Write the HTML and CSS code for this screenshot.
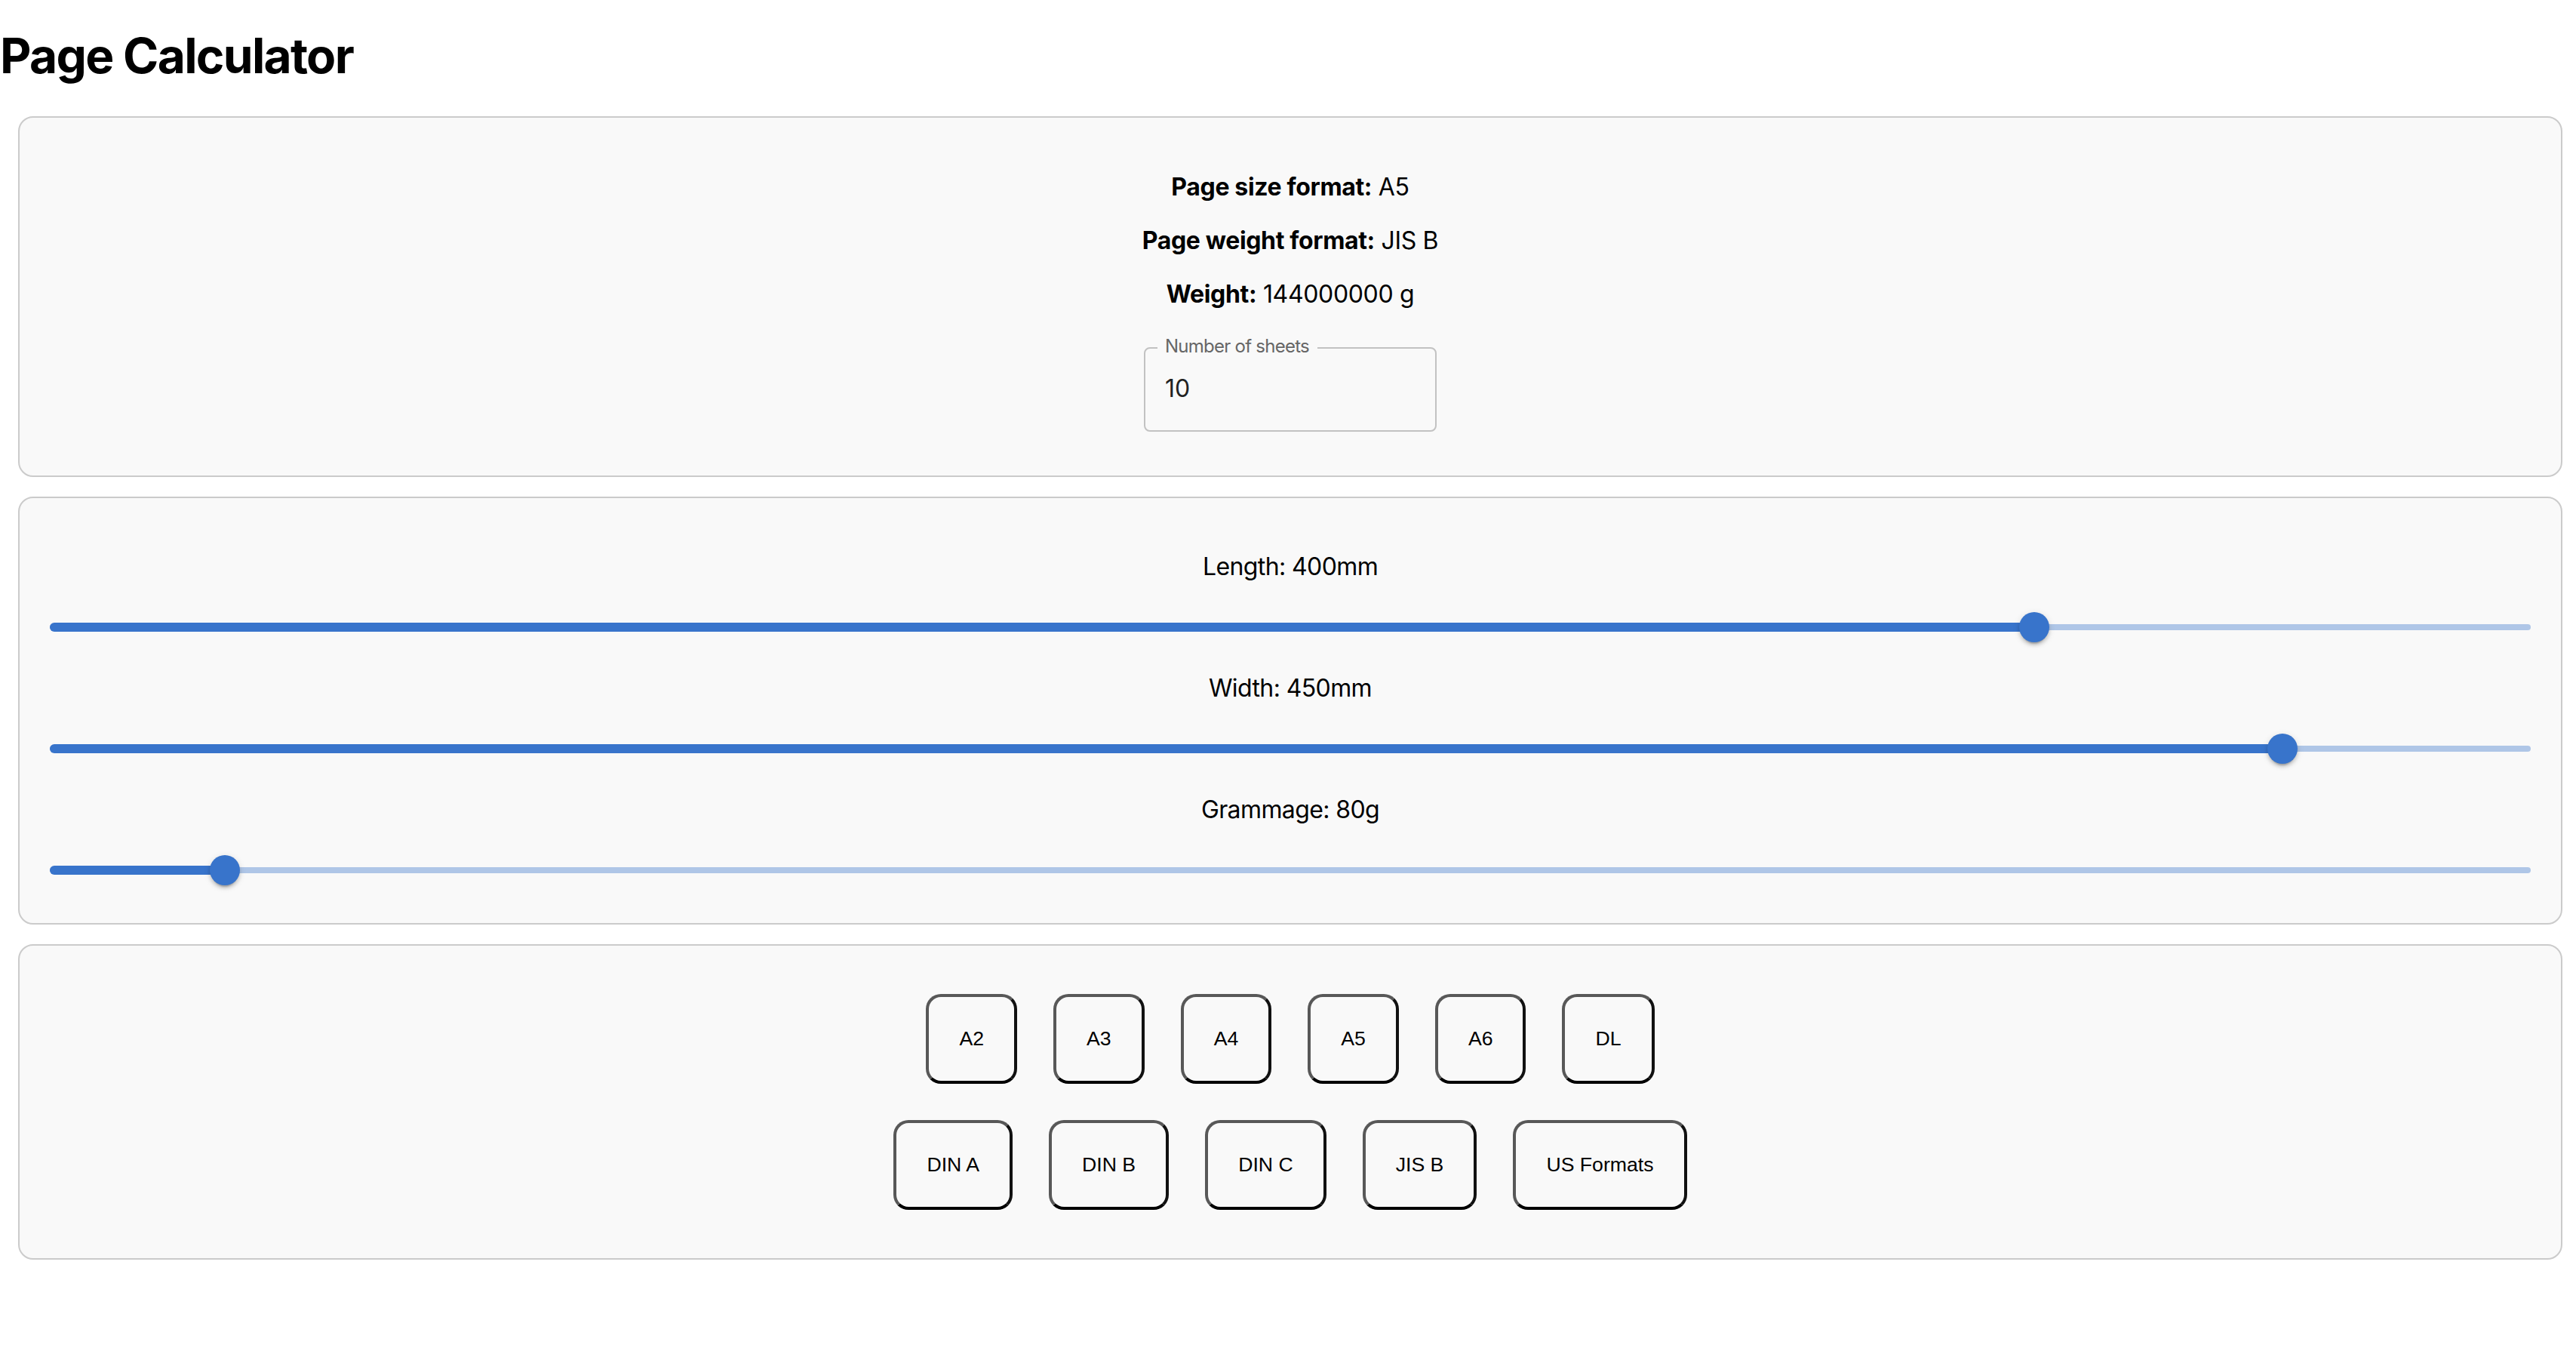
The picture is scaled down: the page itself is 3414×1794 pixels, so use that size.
FILE: index.html
```html
<!DOCTYPE html>
<html lang="en">
<head>
<meta charset="utf-8">
<title>Page Calculator</title>
<link rel="stylesheet" href="styles.css">
</head>
<body>
<h1 class="title">Page Calculator</h1>

<section class="card info">
  <p class="info-line"><strong>Page size format:</strong> A5</p>
  <p class="info-line"><strong>Page weight format:</strong> JIS B</p>
  <p class="info-line"><strong>Weight:</strong> 144000000 g</p>
  <div class="field-row">
    <div class="field">
      <span class="field-label">Number of sheets</span>
      <div class="field-value">10</div>
    </div>
  </div>
</section>

<section class="card sliders">
  <p class="slider-label">Length: 400mm</p>
  <div class="slider">
    <div class="rail"></div>
    <div class="track" style="width:80%"></div>
    <div class="thumb" style="left:80%"></div>
  </div>
  <p class="slider-label">Width: 450mm</p>
  <div class="slider">
    <div class="rail"></div>
    <div class="track" style="width:90%"></div>
    <div class="thumb" style="left:90%"></div>
  </div>
  <p class="slider-label">Grammage: 80g</p>
  <div class="slider">
    <div class="rail"></div>
    <div class="track" style="width:7.07%"></div>
    <div class="thumb" style="left:7.07%"></div>
  </div>
</section>

<section class="card formats">
  <div class="btn-row">
    <button class="fmt-btn" type="button">A2</button>
    <button class="fmt-btn" type="button">A3</button>
    <button class="fmt-btn" type="button">A4</button>
    <button class="fmt-btn" type="button">A5</button>
    <button class="fmt-btn" type="button">A6</button>
    <button class="fmt-btn" type="button">DL</button>
  </div>
  <div class="btn-row">
    <button class="fmt-btn" type="button">DIN A</button>
    <button class="fmt-btn" type="button">DIN B</button>
    <button class="fmt-btn" type="button">DIN C</button>
    <button class="fmt-btn" type="button">JIS B</button>
    <button class="fmt-btn" type="button">US Formats</button>
  </div>
</section>
</body>
</html>
```

FILE: styles.css
```css
html, body {
  margin: 0;
  padding: 0;
  background: #ffffff;
}

body {
  font-family: Inter, "Noto Sans", "Liberation Sans", sans-serif;
  font-size: 32px;
  color: #000;
}

.title {
  margin: 35px 0 42px 0;
  font-size: 64px;
  font-weight: 700;
  line-height: normal;
  letter-spacing: -1.7px;
}

.card {
  box-sizing: border-box;
  margin: 0 18px 26px 24px;
  padding: 0 40px;
  border: 2px solid #cbcbcb;
  border-radius: 20px;
  background: #f9f9f9;
}

/* info card */
.info {
  padding-top: 40px;
  padding-bottom: 40px;
  text-align: center;
}

.info-line {
  margin: 32px 0;
  line-height: normal;
  letter-spacing: -0.35px;
}

.info-line strong {
  font-weight: 700;
}

.field-row {
  margin: 51px 0 18px 0;
}

.field {
  position: relative;
  display: inline-block;
  box-sizing: border-box;
  width: 388px;
  height: 112px;
  padding: 34px 26px 0 26px;
  border: 2px solid #c2c2c2;
  border-radius: 8px;
  text-align: left;
  vertical-align: top;
}

.field-label {
  position: absolute;
  left: 16px;
  top: -18px;
  padding: 0 11px 0 10px;
  background: #f9f9f9;
  font-size: 24px;
  line-height: 29px;
  color: #666666;
  white-space: nowrap;
  letter-spacing: -0.75px;
}

.field-value {
  font-size: 32px;
  line-height: 38px;
  color: #222222;
}

/* sliders card */
.sliders {
  padding-top: 40px;
  padding-bottom: 40px;
  text-align: center;
}

.slider-label {
  margin: 32px 0;
  line-height: 37px;
  letter-spacing: -0.6px;
}

.slider {
  position: relative;
  height: 60px;
}

.rail {
  position: absolute;
  left: 0;
  right: 0;
  top: 26px;
  height: 8px;
  border-radius: 4px;
  background: #3874cb;
  opacity: 0.38;
}

.track {
  position: absolute;
  left: 0;
  top: 24px;
  height: 12px;
  border-radius: 6px;
  background: #3874cb;
}

.thumb {
  position: absolute;
  top: 10px;
  width: 40px;
  height: 40px;
  margin-left: -20px;
  border-radius: 50%;
  background: #3874cb;
  box-shadow: 0 6px 2px -4px rgba(0, 0, 0, 0.2),
              0 4px 4px 0 rgba(0, 0, 0, 0.14),
              0 2px 10px 0 rgba(0, 0, 0, 0.12);
}

/* formats card */
.formats {
  padding-top: 40px;
  padding-bottom: 40px;
}

.btn-row {
  display: flex;
  justify-content: center;
}

.fmt-btn {
  margin: 24px;
  padding: 40px;
  font-family: "Liberation Sans", Arial, sans-serif;
  font-size: 26.67px;
  line-height: normal;
  color: #000;
  background: transparent;
  border-width: 4px;
  border-style: solid;
  border-color: #585858 #111111 #000000 #585858;
  border-radius: 20px;
  white-space: nowrap;
}
```
